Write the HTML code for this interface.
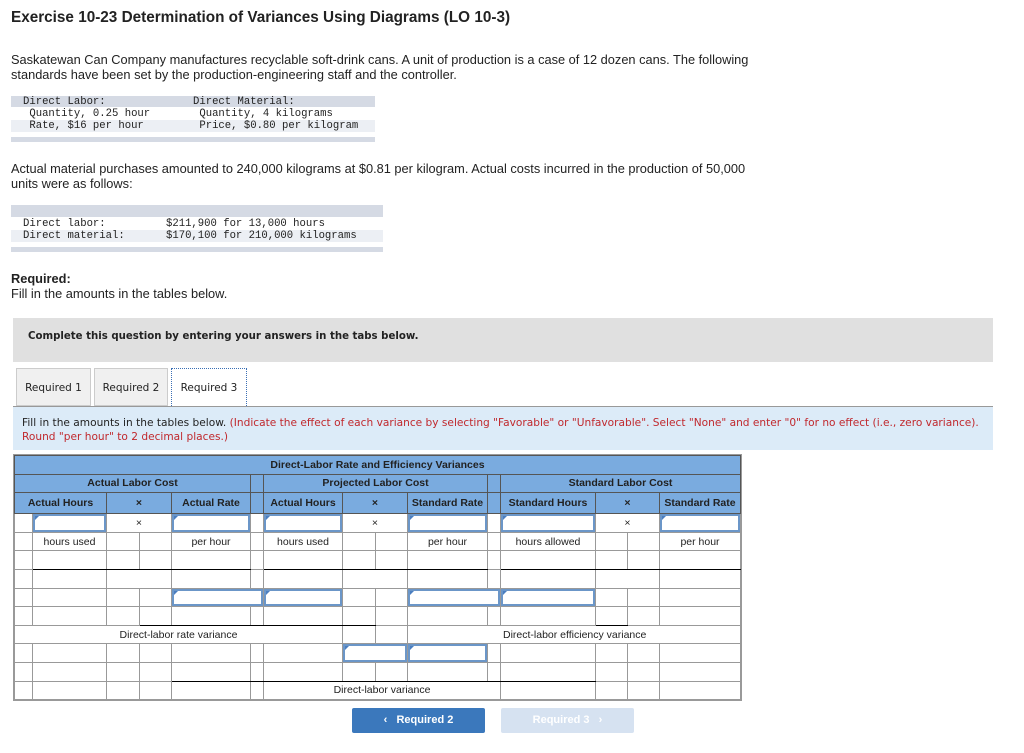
<!DOCTYPE html>
<html><head><meta charset="utf-8"><style>
*{margin:0;padding:0;box-sizing:border-box}
body{width:1024px;height:753px;background:#fff;font-family:"Liberation Sans",Arial,sans-serif;color:#222;position:relative;overflow:hidden}
.a{position:absolute}
h1{position:absolute;left:11px;top:9px;font-size:15.3px;font-weight:bold;color:#222}
p{font-size:12.8px;line-height:15px}
.mono{font-family:"Liberation Mono",monospace;font-size:10.6px;line-height:12px;color:#222;white-space:pre}
.tab{position:absolute;top:368px;height:38px;background:#f0f0f0;border:1px solid #ccc;font-family:"DejaVu Sans",Verdana,sans-serif;font-size:10.5px;text-align:center;line-height:38px;color:#222}
.v{font-family:"DejaVu Sans",Verdana,sans-serif;font-size:10.5px}
table{position:absolute;left:14px;top:455px;border-collapse:collapse;table-layout:fixed;font-size:10.5px;outline:1px solid #999}
td{border:1px solid #999;text-align:center;padding:0;height:18.6px;overflow:hidden;white-space:nowrap}
.h{background:#7aabdf;font-weight:bold;color:#222;border-color:#555}
.i{position:relative}
.i div{position:absolute;left:0;top:0;right:0;bottom:0;border:2px solid #6b96c8}
.i div:before{content:"";position:absolute;left:0;top:0;border-left:4px solid #4a7ec0;border-bottom:4px solid transparent}
.bb{border-bottom:1.5px solid #000}
</style></head><body>
<h1>Exercise 10-23 Determination of Variances Using Diagrams (LO 10-3)</h1>
<p class="a" style="left:11px;top:52px">Saskatewan Can Company manufactures recyclable soft-drink cans. A unit of production is a case of 12 dozen cans. The following<br>standards have been set by the production-engineering staff and the controller.</p>
<div class="a" style="left:11px;top:96px;width:364px;height:11px;background:#d5dae4"></div>
<div class="a" style="left:11px;top:120px;width:364px;height:12px;background:#eceff4"></div>
<div class="a" style="left:11px;top:137px;width:364px;height:5px;background:#d5dae4"></div>
<div class="a mono" style="left:23px;top:96px">Direct Labor:
 Quantity, 0.25 hour
 Rate, $16 per hour</div>
<div class="a mono" style="left:193px;top:96px">Direct Material:
 Quantity, 4 kilograms
 Price, $0.80 per kilogram</div>
<p class="a" style="left:11px;top:161px">Actual material purchases amounted to 240,000 kilograms at $0.81 per kilogram. Actual costs incurred in the production of 50,000<br>units were as follows:</p>
<div class="a" style="left:11px;top:205px;width:372px;height:12px;background:#d5dae4"></div>
<div class="a" style="left:11px;top:230px;width:372px;height:12px;background:#eceff4"></div>
<div class="a" style="left:11px;top:247px;width:372px;height:5px;background:#d5dae4"></div>
<div class="a mono" style="left:23px;top:218px">Direct labor:
Direct material:</div>
<div class="a mono" style="left:166px;top:218px">$211,900 for 13,000 hours
$170,100 for 210,000 kilograms</div>
<p class="a" style="left:11px;top:271px"><b>Required:</b><br>Fill in the amounts in the tables below.</p>
<div class="a" style="left:13px;top:318px;width:980px;height:44px;background:#e0e0e0"></div>
<div class="a v" style="left:28px;top:331px;font-weight:bold;font-size:10.2px">Complete this question by entering your answers in the tabs below.</div>
<div class="tab" style="left:16px;width:75px">Required 1</div>
<div class="tab" style="left:94px;width:74px">Required 2</div>
<div class="tab" style="left:171px;width:76px;background:#fff;border:1px dotted #3a6fb5;border-bottom:none;height:40px">Required 3</div>
<div class="a" style="left:13px;top:406px;width:980px;height:44px;background:#dcebf8;border-top:1px solid #999"></div>
<div class="a v" style="left:22px;top:416px;line-height:14px;font-size:10.6px">Fill in the amounts in the tables below. <span style="color:#c0282d">(Indicate the effect of each variance by selecting "Favorable" or "Unfavorable". Select "None" and enter "0" for no effect (i.e., zero variance).<br>Round "per hour" to 2 decimal places.)</span></div>
<table>
<colgroup><col style="width:18px"><col style="width:74px"><col style="width:33px"><col style="width:32px"><col style="width:79px"><col style="width:13px"><col style="width:79px"><col style="width:33px"><col style="width:32px"><col style="width:80px"><col style="width:13px"><col style="width:95px"><col style="width:32px"><col style="width:32px"><col style="width:81px"></colgroup>
<tr><td class="h" colspan="15">Direct-Labor Rate and Efficiency Variances</td></tr>
<tr><td class="h" colspan="5">Actual Labor Cost</td><td class="h"></td><td class="h" colspan="4">Projected Labor Cost</td><td class="h"></td><td class="h" colspan="4">Standard Labor Cost</td></tr>
<tr style="height:21px"><td class="h" colspan="2">Actual Hours</td><td class="h" colspan="2">×</td><td class="h">Actual Rate</td><td class="h"></td><td class="h">Actual Hours</td><td class="h" colspan="2">×</td><td class="h">Standard Rate</td><td class="h"></td><td class="h">Standard Hours</td><td class="h" colspan="2">×</td><td class="h">Standard Rate</td></tr>
<tr><td></td><td class="i"><div></div></td><td colspan="2">×</td><td class="i"><div></div></td><td></td><td class="i"><div></div></td><td colspan="2">×</td><td class="i"><div></div></td><td></td><td class="i"><div></div></td><td colspan="2">×</td><td class="i"><div></div></td></tr>
<tr><td></td><td>hours used</td><td></td><td></td><td>per hour</td><td></td><td>hours used</td><td></td><td></td><td>per hour</td><td></td><td>hours allowed</td><td></td><td></td><td>per hour</td></tr>
<tr><td></td><td class="bb"></td><td class="bb"></td><td class="bb"></td><td class="bb"></td><td></td><td class="bb"></td><td class="bb"></td><td class="bb"></td><td class="bb"></td><td></td><td class="bb"></td><td class="bb"></td><td class="bb"></td><td class="bb"></td></tr>
<tr><td></td><td></td><td colspan="2"></td><td></td><td></td><td></td><td colspan="2"></td><td></td><td></td><td></td><td colspan="2"></td><td></td></tr>
<tr><td></td><td></td><td></td><td style="border-left:1.5px solid #000"></td><td class="i" colspan="2"><div></div></td><td class="i"><div></div></td><td></td><td style="border-left:1.5px solid #000"></td><td class="i" colspan="2"><div></div></td><td class="i"><div></div></td><td></td><td style="border-left:1.5px solid #000"></td><td></td></tr>
<tr><td></td><td></td><td></td><td class="bb" style="border-left:1.5px solid #000"></td><td class="bb"></td><td class="bb"></td><td class="bb"></td><td class="bb"></td><td style="border-left:1.5px solid #000"></td><td></td><td></td><td></td><td class="bb"></td><td style="border-left:1.5px solid #000"></td><td></td></tr>
<tr><td colspan="7" style="border-right:1px solid #999">Direct-labor rate variance</td><td></td><td></td><td colspan="6" style="text-align:left;padding-left:95px">Direct-labor efficiency variance</td></tr>
<tr><td></td><td></td><td></td><td></td><td style="border-left:1.5px solid #000"></td><td></td><td></td><td class="i" colspan="2"><div></div></td><td class="i"><div></div></td><td></td><td></td><td style="border-left:1.5px solid #000"></td><td></td><td></td></tr>
<tr><td></td><td></td><td></td><td></td><td class="bb" style="border-left:1.5px solid #000"></td><td class="bb"></td><td class="bb"></td><td class="bb"></td><td class="bb"></td><td class="bb"></td><td class="bb"></td><td class="bb"></td><td style="border-left:1.5px solid #000"></td><td></td><td></td></tr>
<tr><td></td><td></td><td></td><td></td><td></td><td></td><td colspan="5">Direct-labor variance</td><td></td><td></td><td></td><td></td></tr>
</table>
<div class="a" style="left:352px;top:708px;width:133px;height:25px;background:#3b78bc;border-radius:2px;color:#fff;font-weight:bold;font-size:11px;line-height:25px;text-align:center">‹&nbsp;&nbsp;&nbsp;Required 2</div>
<div class="a" style="left:501px;top:708px;width:133px;height:25px;background:#d6e2f1;border-radius:2px;color:#fff;font-weight:bold;font-size:11px;line-height:25px;text-align:center">Required 3&nbsp;&nbsp;&nbsp;›</div>
</body></html>
